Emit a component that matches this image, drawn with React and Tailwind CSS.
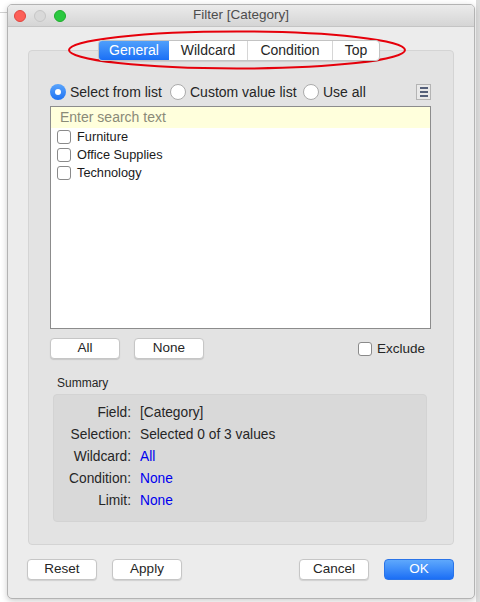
import React from "react";

const font = { fontFamily: '"Liberation Sans", Arial, sans-serif' };

function Btn({ children, w = "w-[70px]", primary = false }) {
  return (
    <div
      className={`${w} h-[21px] flex items-center justify-center rounded-[4px] text-[13.5px] ${
        primary
          ? "bg-gradient-to-b from-[#5ea8fc] to-[#1b6ef5] text-white border border-[#2a74e8]"
          : "bg-white text-[#262626] border border-[#c6c6c6] shadow-[0_1px_1px_rgba(0,0,0,0.12)]"
      }`}
    >
      {children}
    </div>
  );
}

function Check() {
  return <div className="w-[14px] h-[14px] bg-white border border-[#8a8a8a] rounded-[3px] shrink-0" />;
}

function Radio({ on }) {
  return on ? (
    <div className="w-[16px] h-[16px] rounded-full bg-gradient-to-b from-[#5aa4fb] to-[#1d72f3] flex items-center justify-center shrink-0">
      <div className="w-[6px] h-[6px] rounded-full bg-white" />
    </div>
  ) : (
    <div className="w-[16px] h-[16px] rounded-full bg-white border border-[#ababab] shrink-0" />
  );
}

export default function App() {
  const rows = [
    ["Field:", "[Category]", false],
    ["Selection:", "Selected 0 of 3 values", false],
    ["Wildcard:", "All", true],
    ["Condition:", "None", true],
    ["Limit:", "None", true],
  ];
  return (
    <div className="relative w-[480px] h-[602px] bg-white overflow-hidden" style={font}>
      <div className="absolute left-[476px] top-0 w-[4px] h-[602px] bg-[#dcdcdc]" />
      <div className="absolute left-0 top-[12px] w-[7px] h-px bg-[#d0d0d0]" />
      <div className="relative ml-[7px] mt-[4px] w-[468px] h-[595px] rounded-[5px] border border-[#b3b3b3] bg-[#ececec] overflow-hidden shadow-[0_2px_6px_rgba(0,0,0,0.2)] flex flex-col">
        {/* title bar */}
        <div className="relative h-[22px] shrink-0 bg-gradient-to-b from-[#ebebeb] to-[#d5d5d5] border-b border-[#c4c4c4] flex items-center">
          <div className="flex gap-[8px] pl-[6px]">
            <div className="w-[12px] h-[12px] rounded-full bg-[#fc5f57] border border-[#e0443e]" />
            <div className="w-[12px] h-[12px] rounded-full bg-[#d9d9d9] border border-[#c6c6c6]" />
            <div className="w-[12px] h-[12px] rounded-full bg-[#2bc840] border border-[#1dad2b]" />
          </div>
          <div className="absolute inset-0 flex items-center justify-center text-[13.5px] text-[#4d4d4d] -mt-[1px]">
            Filter [Category]
          </div>
        </div>
        {/* content */}
        <div className="flex flex-col px-[20px] pt-[13px]">
          <div className="relative z-10 ml-[70px] w-fit flex h-[21px] rounded-[4px] border border-[#c3c3c3] bg-white text-[14px] text-[#262626] overflow-hidden shadow-[0_1px_1px_rgba(0,0,0,0.1)]">
            <div className="w-[70px] flex items-center justify-center bg-gradient-to-b from-[#4f9ffb] to-[#1a6ff5] text-white">General</div>
            <div className="w-[79px] flex items-center justify-center border-r border-[#d6d6d6]">Wildcard</div>
            <div className="w-[85px] flex items-center justify-center border-r border-[#d6d6d6]">Condition</div>
            <div className="w-[46px] flex items-center justify-center">Top</div>
          </div>
          <div className="-mt-[11px] h-[495px] rounded-[4px] border border-[#d4d4d4] bg-[#e3e3e3] pl-[21px] pr-[22px] pt-[33px] flex flex-col">
            <div className="flex items-center h-[16px] text-[14px] text-[#262626]">
              <Radio on />
              <span className="ml-[4px] w-[100px]">Select from list</span>
              <Radio />
              <span className="ml-[4px] w-[113px]">Custom value list</span>
              <Radio />
              <span className="ml-[4px]">Use all</span>
              <div className="ml-auto w-[15px] h-[16px] border border-[#b4b4b4] bg-[#e9e9e9] flex flex-col items-center justify-center gap-[2px] -mt-[1px]">
                <div className="w-[8px] h-[2px] bg-[#55607a]" />
                <div className="w-[8px] h-[2px] bg-[#55607a]" />
                <div className="w-[8px] h-[2px] bg-[#55607a]" />
              </div>
            </div>
            <div className="mt-[6px] h-[223px] border border-[#8c8c8c] bg-white flex flex-col">
              <div className="h-[21px] bg-[#ffffdc] flex items-center px-[9px] text-[14px] text-[#8a8a78]">
                Enter search text
              </div>
              {["Furniture", "Office Supplies", "Technology"].map((t) => (
                <div key={t} className="h-[18px] flex items-center pl-[6px] gap-[6px] text-[12.75px] text-[#1a1a1a]">
                  <Check />
                  <span>{t}</span>
                </div>
              ))}
            </div>
            <div className="mt-[8px] flex items-center">
              <Btn>All</Btn>
              <div className="ml-[14px]">
                <Btn>None</Btn>
              </div>
              <div className="ml-auto flex items-center gap-[5px] mr-[6px] mt-[2px]">
                <Check />
                <span className="text-[13.5px] text-[#262626]">Exclude</span>
              </div>
            </div>
            <div className="mt-[17px] ml-[7px] text-[12px] text-[#262626] leading-[14px]">Summary</div>
            <div className="mt-[4px] ml-[3px] mr-[4px] h-[128px] rounded-[4px] border border-[#d3d3d3] bg-[#d9d9d9] pt-[7px] flex flex-col">
              {rows.map(([l, v, blue]) => (
                <div key={l} className="h-[22px] flex items-center text-[13.75px]">
                  <span className="w-[77px] text-right text-[#262626]">{l}</span>
                  <span className={`ml-[9px] ${blue ? "text-[#0000ee]" : "text-[#262626]"}`}>{v}</span>
                </div>
              ))}
            </div>
          </div>
          <div className="mt-[14px] -ml-[1px] flex items-center">
            <Btn>Reset</Btn>
            <div className="ml-[15px]">
              <Btn>Apply</Btn>
            </div>
            <div className="ml-auto">
              <Btn>Cancel</Btn>
            </div>
            <div className="ml-[15px]">
              <Btn primary>OK</Btn>
            </div>
          </div>
        </div>
      </div>
      <svg className="absolute left-0 top-0 pointer-events-none" width="480" height="602">
        <ellipse cx="237" cy="50" rx="168" ry="18.5" fill="none" stroke="#e6000b" strokeWidth="2" />
      </svg>
    </div>
  );
}
